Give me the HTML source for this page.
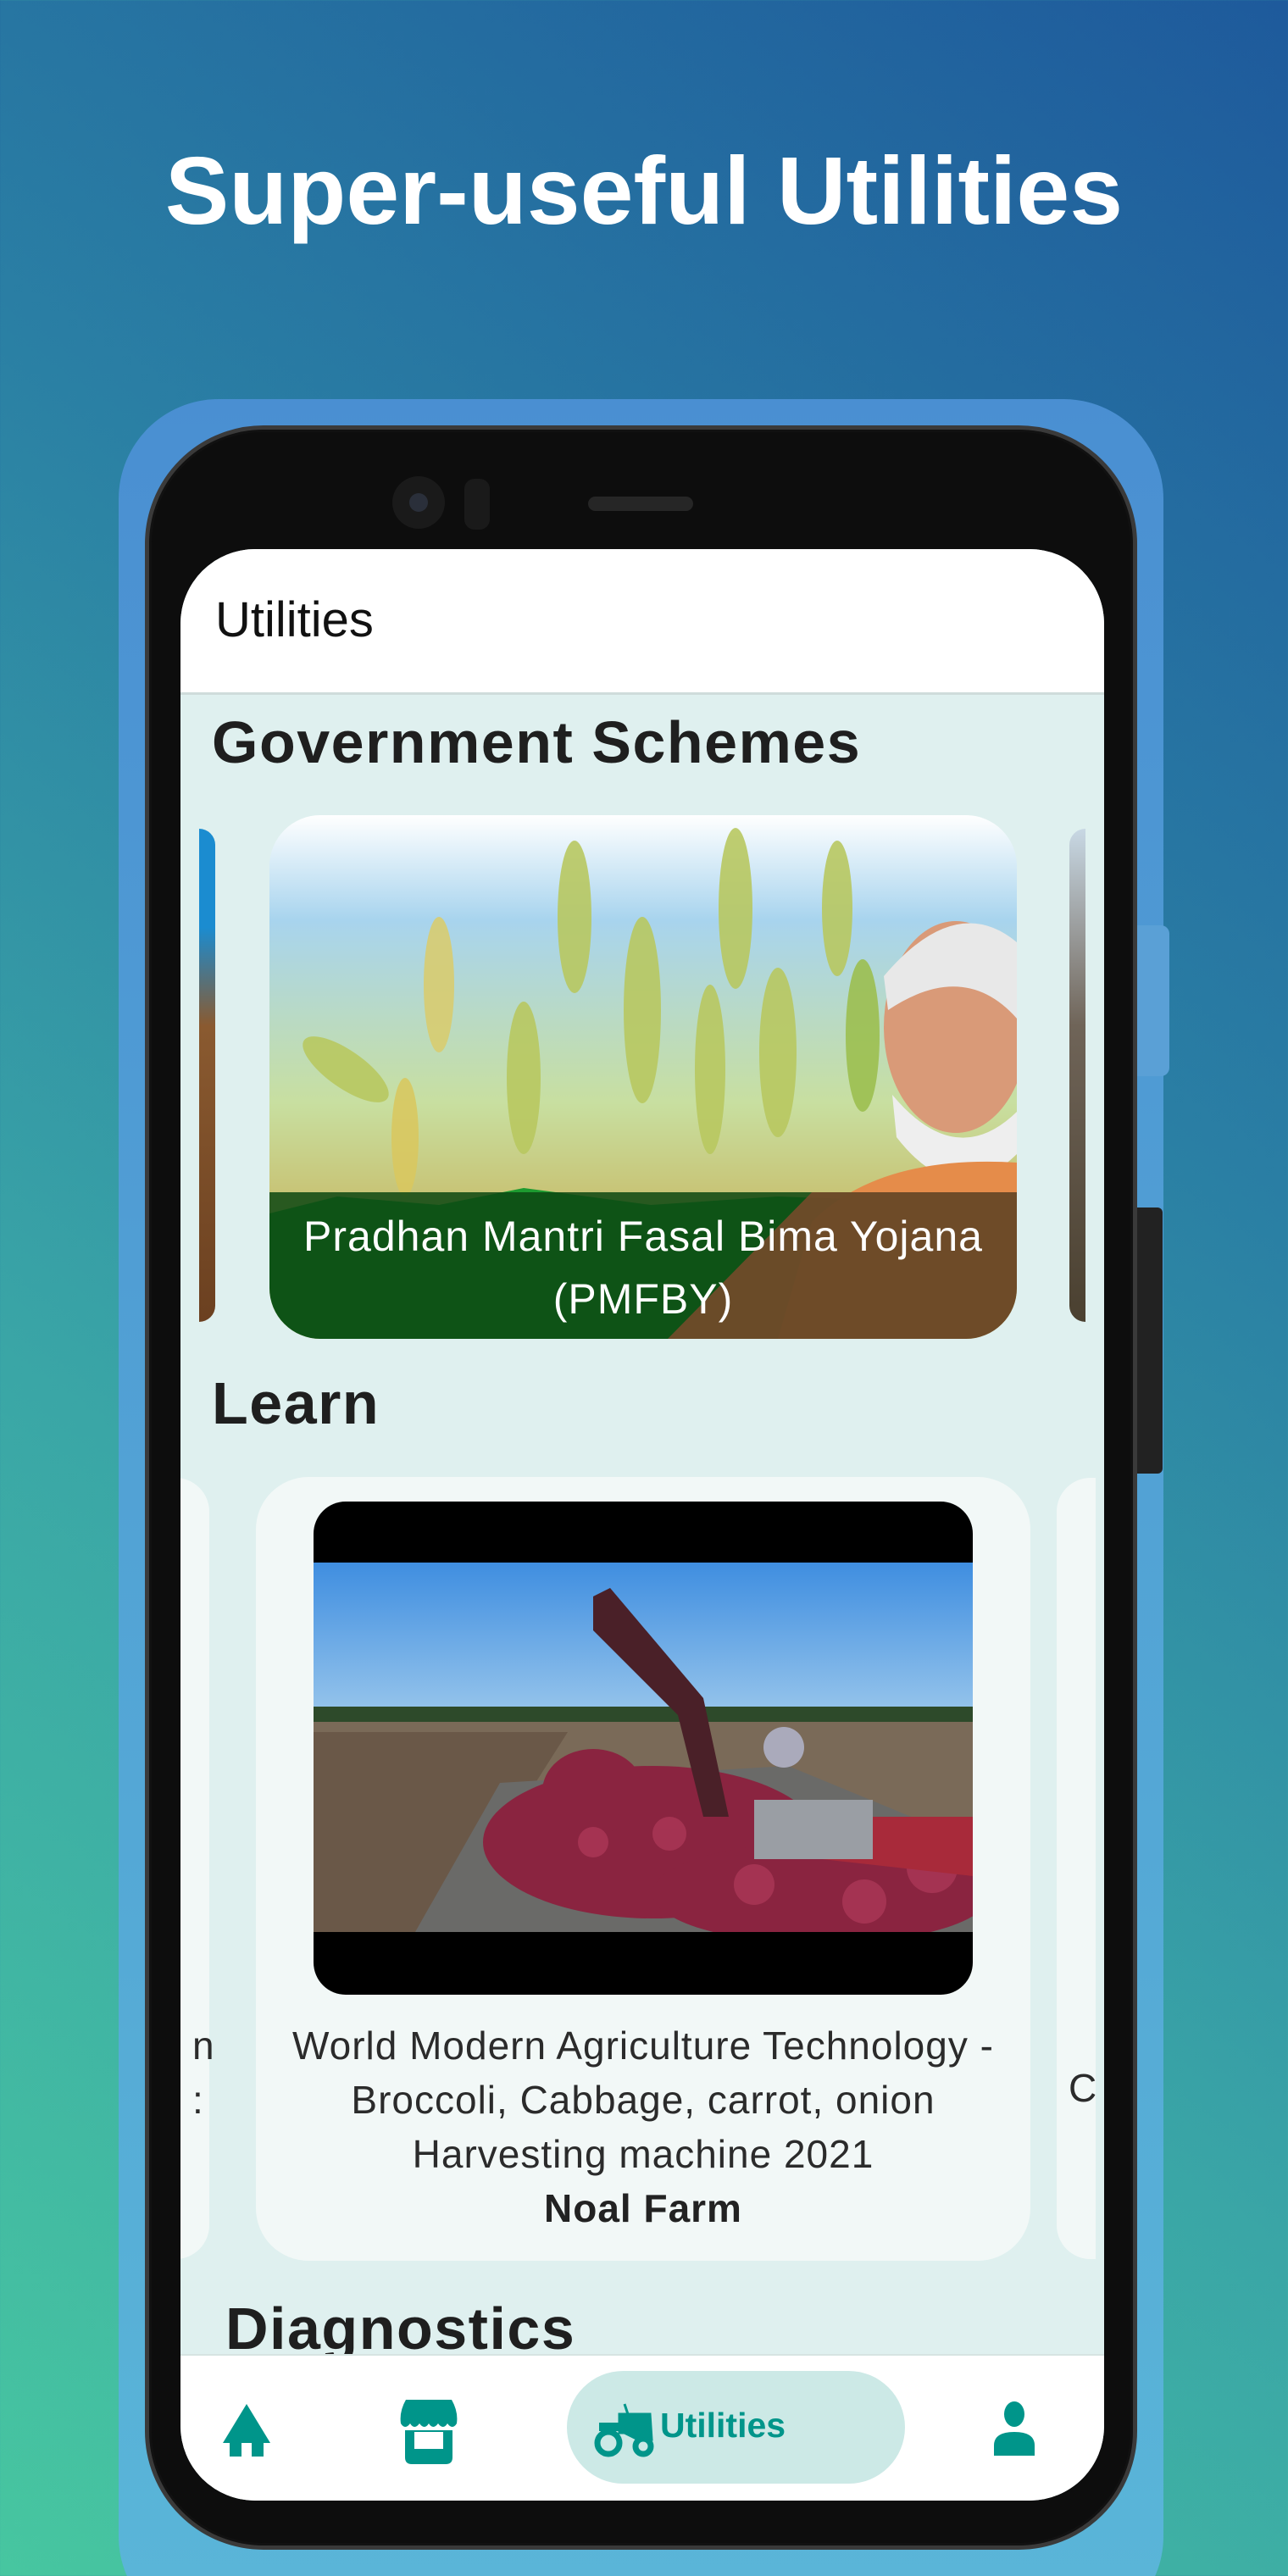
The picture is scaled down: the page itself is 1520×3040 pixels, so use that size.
<!DOCTYPE html>
<html><head><meta charset="utf-8">
<style>
*{margin:0;padding:0;box-sizing:border-box}
html,body{width:1520px;height:3040px;overflow:hidden}
body{position:relative;font-family:"Liberation Sans",sans-serif;
background:linear-gradient(35deg,#47c6a0 0%,#3aa6a6 35%,#2a7fa4 65%,#1e5a9c 100%);}
.abs{position:absolute}
.title{left:0;width:1520px;top:160px;text-align:center;color:#fff;font-weight:bold;font-size:113px;line-height:130px}
.frame{left:140px;top:471px;width:1233px;height:2640px;border-radius:118px;background:linear-gradient(#4a8fd2,#5ab6d8)}
.phone{left:171px;top:502px;width:1171px;height:2507px;border-radius:140px;background:#0d0d0d;border:5px solid #3a3a3a;box-shadow:inset 0 0 0 3px #111}
.screen{left:213px;top:648px;width:1090px;height:2303px;border-radius:88px;background:#dff0ef;overflow:hidden}
.h2{font-weight:bold;color:#1f1f1f;font-size:70px;letter-spacing:1.5px}
.cap{color:#2b2b2b;font-size:46px;letter-spacing:1px;text-align:center;line-height:64px}
</style></head><body>
<div class="abs title">Super-useful Utilities</div>
<div class="abs frame"></div>
<div class="abs" style="left:1342px;top:1092px;width:38px;height:178px;background:#5aa0d6;border-radius:0 10px 10px 0"></div>
<div class="abs" style="left:1342px;top:1425px;width:30px;height:314px;background:#222;border-radius:0 6px 6px 0"></div>
<div class="abs phone"></div>
<div class="abs" style="left:463px;top:562px;width:62px;height:62px;border-radius:50%;background:#1a1a1a"></div>
<div class="abs" style="left:483px;top:582px;width:22px;height:22px;border-radius:50%;background:#2a2f3a"></div>
<div class="abs" style="left:548px;top:565px;width:30px;height:60px;border-radius:12px;background:#1a1a1a"></div>
<div class="abs" style="left:694px;top:586px;width:124px;height:17px;border-radius:9px;background:#262626"></div>

<div class="abs screen">
  <div class="abs" style="left:0;top:0;width:1090px;height:172px;background:#fff;border-bottom:3px solid #cfdcdb"></div>
  <div class="abs" style="left:41px;top:50px;font-size:58px;color:#111">Utilities</div>

  <div class="abs h2" style="left:37px;top:188px">Government Schemes</div>
  <div class="abs" style="left:22px;top:330px;width:19px;height:582px;border-radius:0 20px 20px 0;background:linear-gradient(#1b8cd0 0 20%,#8a5a30 40%,#6b4020 100%)"></div>
  <div class="abs" style="left:1049px;top:330px;width:19px;height:582px;border-radius:20px 0 0 20px;background:linear-gradient(#c8d8e4,#6f6458 40%,#4a4030)"></div>
  <div class="abs" style="left:105px;top:314px;width:882px;height:618px;border-radius:60px;overflow:hidden;background:linear-gradient(#ffffff 0%,#a8d4ee 20%,#c8dfa0 55%,#c8c070 75%)">
    <svg class="abs" style="left:0;top:0" width="882" height="618">
      <g fill="#b8c860" opacity=".9">
        <ellipse cx="360" cy="120" rx="20" ry="90"/><ellipse cx="550" cy="110" rx="20" ry="95"/><ellipse cx="670" cy="110" rx="18" ry="80"/>
        <ellipse cx="440" cy="230" rx="22" ry="110"/><ellipse cx="600" cy="280" rx="22" ry="100"/><ellipse cx="90" cy="300" rx="60" ry="22" transform="rotate(35 90 300)"/>
        <ellipse cx="200" cy="200" rx="18" ry="80" fill="#d8cc70"/><ellipse cx="300" cy="310" rx="20" ry="90"/><ellipse cx="520" cy="300" rx="18" ry="100"/>
        <ellipse cx="700" cy="260" rx="20" ry="90" fill="#9cbf50"/><ellipse cx="160" cy="380" rx="16" ry="70" fill="#d8c860"/>
      </g>
      <path d="M0 470 L80 450 L200 460 L300 440 L450 460 L600 450 L882 460 L882 618 L0 618Z" fill="#1d9a30"/>
      <ellipse cx="810" cy="250" rx="85" ry="125" fill="#d99a78"/>
      <path d="M725 190 Q810 90 882 150 L882 240 Q820 170 730 230Z" fill="#e8e8e8"/>
      <path d="M735 330 Q810 420 882 350 L882 400 Q810 470 740 380Z" fill="#eee"/>
      <path d="M600 618 L640 480 Q720 400 882 410 L882 618Z" fill="#e58c4a"/>
      <rect x="0" y="445" width="882" height="173" fill="#0c4612" opacity=".85"/>
      <path d="M470 618 L640 445 L882 445 L882 618Z" fill="#7a4a2c" opacity=".85"/>
    </svg>
    <div class="abs" style="left:0;width:882px;top:460px;color:#fff;font-size:50px;letter-spacing:1px;text-align:center;line-height:74px">Pradhan Mantri Fasal Bima Yojana<br>(PMFBY)</div>
  </div>

  <div class="abs h2" style="left:37px;top:968px">Learn</div>
  <div class="abs" style="left:-12px;top:1096px;width:46px;height:922px;border-radius:0 40px 40px 0;background:#f2f8f7"></div>
  <div class="abs" style="left:1034px;top:1096px;width:46px;height:922px;border-radius:40px 0 0 40px;background:#f2f8f7"></div>
  <div class="abs cap" style="left:14px;top:1734px;text-align:left">n<br>:</div>
  <div class="abs cap" style="left:1048px;top:1784px;text-align:left">C</div>
  <div class="abs" style="left:89px;top:1095px;width:914px;height:925px;border-radius:62px;background:#f2f8f7"></div>
  <div class="abs" style="left:157px;top:1124px;width:778px;height:582px;border-radius:38px;overflow:hidden;background:#000">
    <svg class="abs" style="left:0;top:72px" width="778" height="436">
      <defs><linearGradient id="sky" x1="0" y1="0" x2="0" y2="1"><stop offset="0" stop-color="#3f8ee0"/><stop offset="1" stop-color="#9cc8ec"/></linearGradient></defs>
      <rect width="778" height="190" fill="url(#sky)"/>
      <rect y="170" width="778" height="20" fill="#2d4a2a"/>
      <rect y="188" width="778" height="248" fill="#7a6a58"/>
      <path d="M0 200 L300 200 L150 436 L0 436Z" fill="#6a5848"/>
      <path d="M120 436 L220 260 L560 240 L778 330 L778 436Z" fill="#6a6a68"/>
      <g fill="#8a2440">
        <ellipse cx="400" cy="330" rx="200" ry="90"/><ellipse cx="600" cy="390" rx="200" ry="60"/><ellipse cx="330" cy="270" rx="60" ry="50"/>
      </g>
      <g fill="#b03a5a" opacity=".7"><circle cx="420" cy="320" r="20"/><circle cx="520" cy="380" r="24"/><circle cx="650" cy="400" r="26"/><circle cx="330" cy="330" r="18"/><circle cx="730" cy="360" r="30"/></g>
      <path d="M330 40 L350 30 L460 160 L490 300 L460 300 L430 180 L330 80Z" fill="#4a2028"/>
      <path d="M520 300 L778 300 L778 370 L600 350Z" fill="#a82a3a"/>
      <rect x="520" y="280" width="140" height="70" fill="#9a9ea4"/>
      <circle cx="555" cy="218" r="24" fill="#aab"/>
    </svg>
  </div>
  <div class="abs cap" style="left:89px;width:914px;top:1734px">World Modern Agriculture Technology -<br>Broccoli, Cabbage, carrot, onion<br>Harvesting machine 2021<br><b style="color:#222">Noal Farm</b></div>

  <div class="abs h2" style="left:53px;top:2060px">Diagnostics</div>
  <div class="abs" style="left:0;top:2130px;width:1090px;height:173px;background:#fff;border-top:2px solid #d6e4e2"></div>
  <div class="abs" style="left:456px;top:2150px;width:399px;height:133px;border-radius:67px;background:#cce9e6"></div>
  <svg class="abs" style="left:48px;top:2185px" width="60" height="66" viewBox="0 0 60 66"><path d="M30 4 L58 50 L50 50 L50 66 L36 66 L36 50 L24 50 L24 66 L10 66 L10 50 L2 50Z" fill="#00958a"/></svg>
  <svg class="abs" style="left:258px;top:2184px" width="70" height="76" viewBox="0 0 70 76"><path d="M8 0 L62 0 Q70 14 68 28 Q63 36 57 28 Q52 36 46 28 Q40 36 35 28 Q30 36 24 28 Q18 36 13 28 Q7 36 2 28 Q0 14 8 0Z M7 36 L63 36 L63 68 Q63 76 55 76 L15 76 Q7 76 7 68Z" fill="#00958a"/><rect x="18" y="38" width="34" height="20" fill="#fff"/></svg>
  <svg class="abs" style="left:488px;top:2187px" width="72" height="66" viewBox="0 0 72 66"><g fill="none" stroke="#00958a" stroke-width="7"><circle cx="17" cy="48" r="13"/><circle cx="58" cy="52" r="9"/></g><path d="M30 14 L66 14 L68 44 L52 44 L36 36 L30 36Z M40 14 L36 2" fill="#00958a" stroke="#00958a" stroke-width="3"/><rect x="6" y="24" width="24" height="10" fill="#00958a"/></svg>
  <div class="abs" style="left:566px;top:2191px;font-size:41px;font-weight:bold;color:#00958a">Utilities</div>
  <svg class="abs" style="left:958px;top:2186px" width="52" height="64" viewBox="0 0 52 64"><ellipse cx="26" cy="15" rx="12" ry="15" fill="#00958a"/><path d="M2 64 L2 52 Q2 36 26 36 Q50 36 50 52 L50 64Z" fill="#00958a"/></svg>
</div>
</body></html>
